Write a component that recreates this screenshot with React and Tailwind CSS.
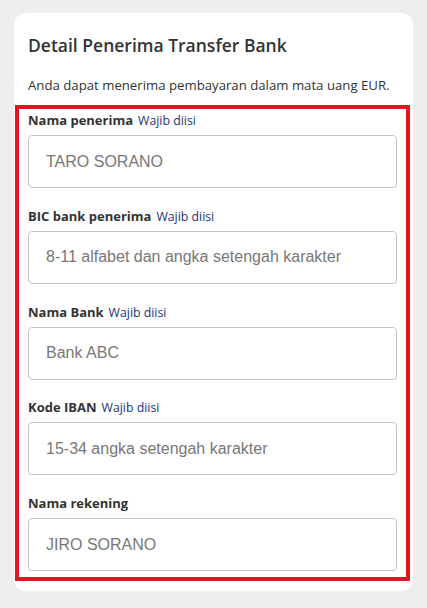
export default function App() {
  const fields = [
    { label: "Nama penerima", req: true, ph: "TARO SORANO" },
    { label: "BIC bank penerima", req: true, ph: "8-11 alfabet dan angka setengah karakter" },
    { label: "Nama Bank", req: true, ph: "Bank ABC" },
    { label: "Kode IBAN", req: true, ph: "15-34 angka setengah karakter" },
    { label: "Nama rekening", req: false, ph: "JIRO SORANO" },
  ];
  return (
    <div className="min-h-[608px] w-[427px] bg-[#eeeeee] pt-[13px] pl-[14px]" style={{ fontFamily: '"Open Sans", "Noto Sans", sans-serif' }}>
      <div className="w-[399px] rounded-[12px] bg-white pt-[20px] pb-[10px]">
        <h1 className="px-[14px] text-[17.5px] leading-[24px] font-semibold text-[#333333]">Detail Penerima Transfer Bank</h1>
        <p className="mt-[18px] px-[14px] text-[13.2px] leading-[20px] text-[#333333]">Anda dapat menerima pembayaran dalam mata uang EUR.</p>
        <div className="mt-[10px] ml-[1px] w-[395px] border-[4px] border-[#e3141f] px-[9px] pt-[2px] pb-[6px] flex flex-col gap-[18.75px]">
          {fields.map((f) => (
            <div key={f.label} className="flex flex-col">
              <div className="flex h-[18px] items-baseline text-[13px] leading-[18px] text-[#333333]">
                <span className="font-bold">{f.label}</span>
                {f.req && <span className="ml-[5px] text-[12.3px] leading-none text-[#22307a]">Wajib diisi</span>}
              </div>
              <input
                className="mt-[6px] h-[53px] w-full rounded-[4px] border border-[#c4c4c4] bg-white pl-[17px] text-[16px] text-[#333] placeholder:text-[#777777] outline-none"
                style={{ fontFamily: '"Liberation Sans", Arial, sans-serif' }}
                placeholder={f.ph}
              />
            </div>
          ))}
        </div>
      </div>
    </div>
  );
}
